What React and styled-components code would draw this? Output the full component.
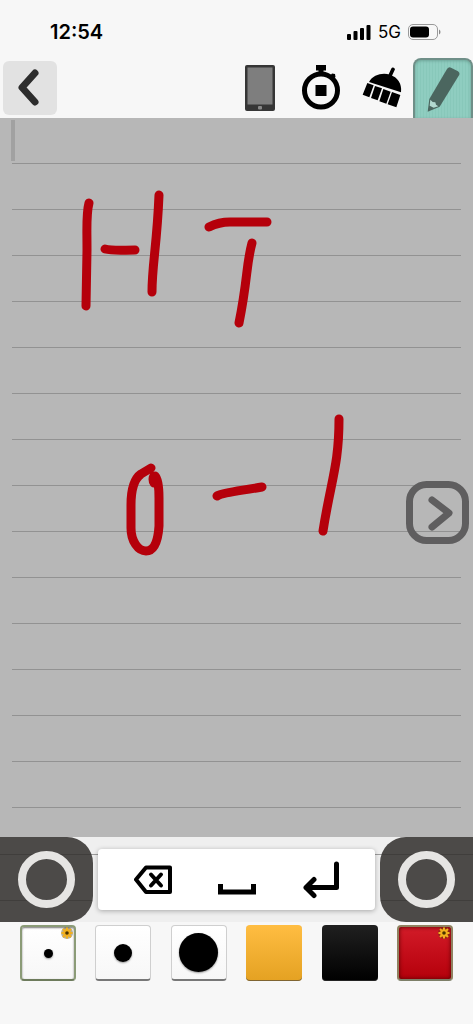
import React, { useState } from "react";
import styled, { createGlobalStyle } from "styled-components";

const GlobalStyle = createGlobalStyle`
  * {
    box-sizing: border-box;
  }
  body {
    margin: 0;
    background: #f7f7f7;
    font-family: Inter, "Liberation Sans", sans-serif;
    color: #000;
  }
  button {
    border: 0;
    padding: 0;
    background: none;
    cursor: pointer;
  }
  svg {
    display: block;
  }
`;

const Screen = styled.div`
  position: relative;
  display: flex;
  flex-direction: column;
  min-height: 100vh;
`;
const StatusBar = styled.div`
  display: flex;
  align-items: center;
  justify-content: space-between;
  height: 58px;
  padding: 6px 32px 0 50px;
`;
const Time = styled.time`
  font-size: 20px;
  font-weight: 600;
  line-height: 24px;
`;
const Signals = styled.div`
  display: flex;
  align-items: center;
  gap: 7px;
  font-size: 17px;
  line-height: 24px;
`;
const Toolbar = styled.header`
  display: flex;
  gap: 1px;
  height: 60px;
`;
const BackButton = styled.button`
  width: 54px;
  height: 54px;
  margin: 3px auto 0 3px;
  border-radius: 6px;
  background: #e2e2e2;
`;
const Tool = styled.button`
  display: flex;
  align-items: center;
  justify-content: center;
  width: 60px;
  height: 60px;
  ${(p) =>
    p.$active &&
    `
    border: 2px solid #6f8f88;
    border-bottom: 0;
    border-radius: 8px 8px 0 0;
    background: repeating-linear-gradient(90deg, #8fcdc0 0 2px, #88c8ba 2px 3px);
    box-shadow: inset 0 1px 3px #6da396;
  `}
`;
const rules = (first, color) => `
  repeating-linear-gradient(
    transparent 0 45px, ${color} 45px 46px
  ) 0 ${first}px
`;
const Paper = styled.main`
  position: relative;
  flex: 1;
  min-height: 719px;
  padding: 0 12px;
  background: #b7b7b7;
`;
const Ruled = styled.div`
  height: 100%;
  min-height: 719px;
  background: ${rules(0, "#929292")};
`;
const Caret = styled.div`
  position: absolute;
  top: 2px;
  left: 11px;
  width: 4px;
  height: 41px;
  background: #a1a1a1;
`;
const Ink = styled.svg`
  position: absolute;
  top: 0;
  left: 0;
  width: 100%;
  height: 719px;
  fill: none;
  stroke: #b5000b;
  stroke-width: 9;
  stroke-linecap: round;
  stroke-linejoin: round;
`;
const NextButton = styled.button`
  position: absolute;
  top: 50%;
  right: 4px;
  width: 63px;
  height: 63px;
  margin-top: -31px;
`;
const Dock = styled.div`
  display: flex;
  align-items: center;
  justify-content: space-between;
  height: 85px;
  background: #efefef;
  position: relative;
  &::before {
    content: "";
    position: absolute;
    inset: 0 12px;
    background: ${rules(-28, "#9c9c9c")};
  }
`;
const Pad = styled.button`
  position: relative;
  display: flex;
  align-items: center;
  justify-content: center;
  width: 93px;
  height: 85px;
  background: linear-gradient(
    #4c4a48 0 17px, #403e3c 17px 18px, #4c4a48 18px 63px,
    #403e3c 63px 64px, #4c4a48 64px
  );
  border-radius: ${(p) => (p.$right ? "26px 0 0 26px" : "0 26px 26px 0")};
`;
const Ring = styled.span`
  width: 57px;
  height: 57px;
  border: 8px solid #e6e5e3;
  border-radius: 50%;
`;
const Keys = styled.div`
  position: relative;
  display: flex;
  justify-content: center;
  flex: 1;
  height: 61px;
  margin: 0 5px;
  border-radius: 4px;
  background: #fff;
  box-shadow: 0 1px 5px rgba(0, 0, 0, 0.3);
`;
const Key = styled.button`
  display: flex;
  align-items: center;
  justify-content: center;
  width: 84px;
  height: 61px;
`;
const Palette = styled.footer`
  display: flex;
  justify-content: space-between;
  height: 102px;
  padding: 3px 20px 0;
`;
const Swatch = styled.button`
  position: relative;
  display: flex;
  align-items: center;
  justify-content: center;
  width: 56px;
  height: 56px;
  border-radius: 4px;
  background: ${(p) => p.$fill};
  box-shadow: inset 0 -1px 0 rgba(60, 60, 60, 0.6);
`;
const PenSwatch = styled(Swatch)`
  border: 1px solid #cfcfcf;
  border-bottom: 2px solid #777;
  box-shadow: none;
  ${(p) =>
    p.$active &&
    `
    border: 2px solid #8b9b77;
    border-bottom-color: #6d7b5c;
    box-shadow: inset 0 1px 2px #777;
  `}
`;
const ColorSwatch = styled(Swatch)`
  ${(p) =>
    p.$active &&
    `
    border: 2px solid #8f8260;
    border-bottom-color: #7d7f68;
    box-shadow: inset 0 0 4px #500;
  `}
`;
const Dot = styled.span`
  width: ${(p) => p.$size}px;
  height: ${(p) => p.$size}px;
  border-radius: 50%;
  background: #000;
  box-shadow: 0 1px 2px rgba(0, 0, 0, 0.4);
`;
const GearBadge = styled.svg`
  position: absolute;
  top: -2px;
  right: -1px;
`;

const pens = [
  { name: "Fine pen", size: 9 },
  { name: "Medium pen", size: 18 },
  { name: "Thick pen", size: 39 },
];
const colors = [
  { name: "Yellow", fill: "linear-gradient(#ffbd42, #e4a122)" },
  { name: "Black", fill: "linear-gradient(#202020, #000)" },
  { name: "Red", fill: "linear-gradient(#d21b28, #b5000b)" },
];
const strokes = [
  "M89 203C86 214 87 224 87 250L86 306",
  "M105 249C113 251 123 250 135 250",
  "M159 195C157 245 152 265 152 292",
  "M209 227C217 223 222 222 230 222H267",
  "M252 243C246 265 248 278 239 323",
  "M151 468L141 474C134 479 131 488 131 505V528C131 541 138 551 146 551C154 551 158 541 159 526V498C159 488 158 479 155 476C152 476 153 482 154 483",
  "M217 496C224 492 240 491 262 487",
  "M339 419C339 465 331 480 323 531",
];

const Gear = () => (
  <GearBadge width="16" height="16" viewBox="-8 -8 16 16" aria-hidden="true">
    <circle r="6" fill="#4a3900" opacity="0.4" />
    <path
      d="M0-5.500V5.500M-5.500 0H5.500M-4-4L4 4M-4 4L4-4"
      stroke="#f2b01e"
      strokeWidth="2"
    />
    <circle r="2.800" fill="#4a3200" stroke="#f2b01e" strokeWidth="2" />
  </GearBadge>
);

const SignalBars = () => (
  <svg width="24" height="16" viewBox="0 0 24 16" aria-hidden="true">
    <rect x="0" y="10" width="4" height="6" rx="1" />
    <rect x="6.5" y="7" width="4" height="9" rx="1" />
    <rect x="13" y="4" width="4" height="12" rx="1" />
    <rect x="19.5" y="1" width="4" height="15" rx="1" />
  </svg>
);

const Battery = () => (
  <svg width="33" height="16" viewBox="0 0 33 16" aria-hidden="true">
    <rect x="0.5" y="0.5" width="29" height="15" rx="4.5" fill="none" stroke="#999" />
    <rect x="2" y="2.5" width="19" height="11" rx="3" />
    <path d="M31 5.5C33 6.5 33 9.5 31 10.5Z" fill="#888" />
  </svg>
);

const TabletIcon = () => (
  <svg width="30" height="46" viewBox="0 0 30 46" aria-hidden="true">
    <rect width="30" height="46" rx="2" fill="#363636" />
    <rect x="2.5" y="2.5" width="25" height="37" fill="#7e7e7e" />
    <rect x="13" y="41" width="4" height="3.5" rx="1" fill="#888" />
  </svg>
);

const StopwatchIcon = () => (
  <svg width="40" height="46" viewBox="0 0 40 46" aria-hidden="true">
    <circle cx="20" cy="25.5" r="16.5" fill="none" stroke="#000" strokeWidth="5" />
    <path d="M15 0H25V5.5H22.5V9H17.5V5.500H15ZM29 11L31 8.5L34 9L34.5 12L32 14.5ZM14.5 20H25.500V31H14.5Z" />
  </svg>
);

const BroomIcon = () => (
  <svg width="40" height="42" viewBox="386 202 120 126" aria-hidden="true">
    <path d="M479 209L470 228" stroke="#000" strokeWidth="11" strokeLinecap="round" />
    <path d="M407 247C419 225 447 218 470 225C493 233 506 251 503 278Z" />
    <path d="M402 250L421 257L408 293L388 285ZM425 259L446 266L433 302L413 295ZM450 268L472 276L459 312L438 305ZM476 277L501 286L489 323L463 314Z" />
  </svg>
);

const PencilIcon = () => (
  <svg width="34" height="46" viewBox="578 197 102 138" aria-hidden="true">
    <path d="M641 206Q646 199 653 202L674 213Q681 218 677 225L619 319L583 334L588 296Z" fill="#4b665f" />
    <path d="M591 298L598 305L606 306L608 313L615 318L601 322L589 316Z" fill="#b2d8cf" />
  </svg>
);

const BackspaceIcon = () => (
  <svg width="38" height="30" viewBox="0 0 38 30" fill="none" stroke="#000" strokeWidth="4" strokeLinejoin="round" aria-hidden="true">
    <path d="M12 2.5H36V27H12L2 14.5Z" />
    <path d="M17 9.500L27 20.500M27 9.500L17 20.500" strokeLinecap="round" />
  </svg>
);

const SpaceIcon = () => (
  <svg width="38" height="30" viewBox="0 0 38 30" fill="none" stroke="#000" strokeWidth="5" aria-hidden="true">
    <path d="M2.5 19V27H35.5V19" />
  </svg>
);

const EnterIcon = () => (
  <svg
    width="38"
    height="38"
    viewBox="0 0 38 38"
    fill="none"
    stroke="#000"
    strokeWidth="5"
    strokeLinecap="round"
    strokeLinejoin="round"
    aria-hidden="true"
  >
    <path d="M34.5 3V26.5H4M12 18.5L4 26.5L12 34.5" />
  </svg>
);

const App = () => {
  const [pen, setPen] = useState("Fine pen");
  const [color, setColor] = useState("Red");
  return (
    <Screen>
      <GlobalStyle />
      <StatusBar>
        <Time>12:54</Time>
        <Signals>
          <SignalBars />
          <span>5G</span>
          <Battery />
        </Signals>
      </StatusBar>
      <Toolbar>
        <BackButton aria-label="Back">
          <svg width="54" height="54" viewBox="0 0 54 54" fill="none" stroke="#2d2d2d" strokeWidth="7" strokeLinecap="round" strokeLinejoin="round">
            <path d="M32 12L19 26.5L32 41" />
          </svg>
        </BackButton>
        <Tool aria-label="Device">
          <TabletIcon />
        </Tool>
        <Tool aria-label="Stopwatch">
          <StopwatchIcon />
        </Tool>
        <Tool aria-label="Clear page">
          <BroomIcon />
        </Tool>
        <Tool aria-label="Draw" $active>
          <PencilIcon />
        </Tool>
      </Toolbar>
      <Paper>
        <Ruled />
        <Caret />
        <Ink viewBox="0 118 473 719" preserveAspectRatio="xMinYMin meet">
          {strokes.map((d) => (
            <path key={d} d={d} />
          ))}
        </Ink>
      </Paper>
      <Dock>
        <Pad aria-label="Left pad">
          <Ring />
        </Pad>
        <Keys>
          <Key aria-label="Backspace">
            <BackspaceIcon />
          </Key>
          <Key aria-label="Space">
            <SpaceIcon />
          </Key>
          <Key aria-label="Enter">
            <EnterIcon />
          </Key>
        </Keys>
        <Pad aria-label="Right pad" $right>
          <Ring />
        </Pad>
      </Dock>
      <Palette>
        {pens.map(({ name, size }) => (
          <PenSwatch
            key={name}
            aria-label={name}
            $fill="linear-gradient(#fff, #f7f7f7)"
            $active={pen === name}
            onClick={() => setPen(name)}
          >
            <Dot $size={size} />
            {pen === name && <Gear />}
          </PenSwatch>
        ))}
        {colors.map(({ name, fill }) => (
          <ColorSwatch
            key={name}
            aria-label={name}
            $fill={fill}
            $active={color === name}
            onClick={() => setColor(name)}
          >
            {color === name && <Gear />}
          </ColorSwatch>
        ))}
      </Palette>
      <NextButton aria-label="Next page">
        <svg width="63" height="63" viewBox="0 0 63 63" fill="none" stroke="#5f5e5f" strokeWidth="7">
          <rect x="3.5" y="3.5" width="56" height="56" rx="17" />
          <path d="M26 19L43 32L26 46" strokeLinecap="round" strokeLinejoin="round" />
        </svg>
      </NextButton>
    </Screen>
  );
};
export default App;
